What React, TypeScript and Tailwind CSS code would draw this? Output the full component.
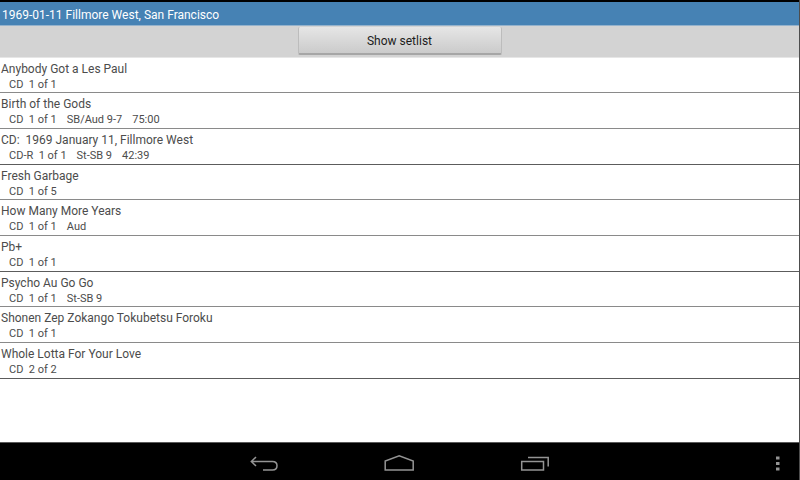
interface Recording {
  title: string;
  media: string;
  source?: string;
  length?: string;
}

const recordings: Recording[] = [
  { title: "Anybody Got a Les Paul", media: "CD  1 of 1" },
  { title: "Birth of the Gods", media: "CD  1 of 1", source: "SB/Aud 9-7", length: "75:00" },
  { title: "CD:  1969 January 11, Fillmore West", media: "CD-R  1 of 1", source: "St-SB 9", length: "42:39" },
  { title: "Fresh Garbage", media: "CD  1 of 5" },
  { title: "How Many More Years", media: "CD  1 of 1", source: "Aud" },
  { title: "Pb+", media: "CD  1 of 1" },
  { title: "Psycho Au Go Go", media: "CD  1 of 1", source: "St-SB 9" },
  { title: "Shonen Zep Zokango Tokubetsu Foroku", media: "CD  1 of 1" },
  { title: "Whole Lotta For Your Love", media: "CD  2 of 2" },
];

function RecordingRow({ recording }: { recording: Recording }) {
  return (
    <li className="border-b border-[#8a8a8a] pt-[3px] pb-px pl-px whitespace-pre nth-[3n]:border-[#5c5c5c] nth-[3n+1]:pb-0">
      <p className="text-[12px] leading-4">{recording.title}</p>
      <div className="flex gap-2.5 pl-2 text-[11px] leading-[15px]">
        <span>{recording.media}</span>
        {recording.source && <span>{recording.source}</span>}
        {recording.length && <span>{recording.length}</span>}
      </div>
    </li>
  );
}

function NavBar() {
  return (
    <nav className="grid h-[38px] grid-cols-[1fr_auto_1fr] items-center border-t border-[#5a5a5a] bg-black text-[#949494]">
      <div />
      <div className="flex items-center gap-[104px] pt-1">
        <button type="button" aria-label="Back">
          <svg className="h-5 w-8" viewBox="0 0 32 20" fill="none" stroke="currentColor" strokeWidth="1.5">
            <path d="M8 3 3.3 7.5 8 12M3.5 7.5H24.5C27.5 7.5 29 9 29 11.8C29 14.6 27.5 16 24.5 16H15" />
          </svg>
        </button>
        <button type="button" aria-label="Home">
          <svg className="h-5 w-8" viewBox="0 0 32 20" fill="none" stroke="currentColor" strokeWidth="1.5">
            <path d="M1.2 16V7L15.2 1.8L29.2 7V16Z" />
          </svg>
        </button>
        <button type="button" aria-label="Recent apps">
          <svg className="h-5 w-8" viewBox="0 0 32 20" fill="none" stroke="currentColor" strokeWidth="1.5">
            <path d="M1.7 7.5H23.5V16H1.7ZM8 3.5H28.2V12.5" />
          </svg>
        </button>
      </div>
      <button type="button" aria-label="More options" className="mr-3 justify-self-end pt-1">
        <svg className="h-5 w-5" viewBox="0 0 20 20" fill="currentColor">
          <path d="M9 2.5h3.5v3H9zM9 8h3.5v3H9zM9 13.5h3.5v3H9z" />
        </svg>
      </button>
    </nav>
  );
}

export default function App() {
  return (
    <div className="flex min-h-screen flex-col border-r border-[#4d4d4d] bg-white font-['Roboto',sans-serif] text-[#4c4c4c]">
      <header className="border-t-2 border-b border-t-black border-b-[#94b2cc] bg-[#4682b4] pt-1 pl-0.5 text-white">
        <h1 className="text-[12px] leading-[19px]">1969-01-11 Fillmore West, San Francisco</h1>
      </header>
      <div className="flex justify-center border-b border-[#e6e6e6] bg-[#d3d3d3] pt-px pb-0.5">
        <button
          type="button"
          className="h-7 w-[204px] rounded-xs border border-t-0 border-b-2 border-[#bcbcbc] border-b-[#a6a6a6] bg-linear-to-b from-[#e6e6e6] to-[#cbcbcb] pt-0.5 text-[12px] text-[#1c1c1c]"
        >
          Show setlist
        </button>
      </div>
      <main className="flex-1">
        <ul>
          {recordings.map((recording) => (
            <RecordingRow key={recording.title} recording={recording} />
          ))}
        </ul>
      </main>
      <NavBar />
    </div>
  );
}
